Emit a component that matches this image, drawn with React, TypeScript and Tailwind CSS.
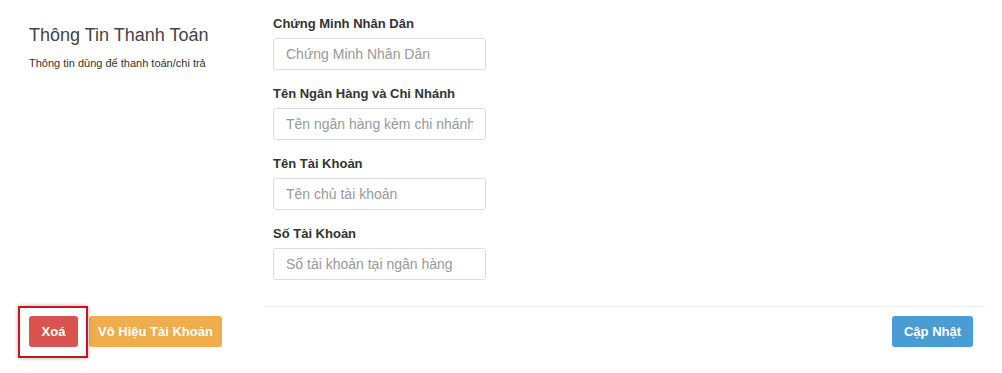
import React from "react";

const fields = [
  { label: "Chứng Minh Nhân Dân", placeholder: "Chứng Minh Nhân Dân" },
  { label: "Tên Ngân Hàng và Chi Nhánh", placeholder: "Tên ngân hàng kèm chi nhánh" },
  { label: "Tên Tài Khoản", placeholder: "Tên chủ tài khoản" },
  { label: "Số Tài Khoản", placeholder: "Số tài khoản tại ngân hàng" },
];

export default function App() {
  return (
    <div
      className="w-[1002px] h-[373px] bg-white text-[#333] overflow-hidden"
      style={{ fontFamily: '"Liberation Sans", Arial, sans-serif' }}
    >
      <div className="flex">
        {/* Section description */}
        <div className="w-[264px] shrink-0 pl-[29px] pt-[23px]">
          <h3 className="text-[18px] leading-[24px] text-[#444] font-normal">
            Thông Tin Thanh Toán
          </h3>
          <p className="mt-[9px] text-[11px] leading-[14px] text-[#333]">
            Thông tin dùng để thanh toán/chi trả
          </p>
        </div>

        {/* Form fields */}
        <div className="w-[721px] pl-[9px] pt-[15px] pb-[26px] border-b border-[#f0f0f0]">
          {fields.map((f, i) => (
            <div key={f.label} className={i < fields.length - 1 ? "mb-[15px]" : ""}>
              <label className="block text-[13px] leading-[18px] font-bold text-[#333] mb-[5px]">
                {f.label}
              </label>
              <input
                type="text"
                placeholder={f.placeholder}
                className="block w-[213px] h-[32px] px-[12px] text-[14px] border border-[#dcdcdc] rounded-[3px] bg-white placeholder:text-[#999] outline-none"
                style={{ fontFamily: '"Liberation Sans", Arial, sans-serif' }}
              />
            </div>
          ))}
        </div>
      </div>

      {/* Footer actions */}
      <div className="flex items-start pt-[9px] pl-[29px] pr-[29px]">
        <div className="relative">
          <div className="absolute left-[-11px] top-[-10px] right-[-10px] bottom-[-11px] border-2 border-[#c8161d] shadow-[0_0_4px_rgba(0,0,0,0.35)]" />
          <button className="relative h-[31px] w-[49px] rounded-[3px] bg-[#d9534f] text-white text-[13px] font-bold">
            Xoá
          </button>
        </div>
        <button className="ml-[11px] h-[31px] w-[133px] rounded-[3px] bg-[#f0ad4e] text-white text-[13px] font-bold">
          Vô Hiệu Tài Khoản
        </button>
        <button className="ml-auto h-[31px] w-[81px] rounded-[3px] bg-[#4a9cd3] text-white text-[13px] font-bold">
          Cập Nhật
        </button>
      </div>
    </div>
  );
}
